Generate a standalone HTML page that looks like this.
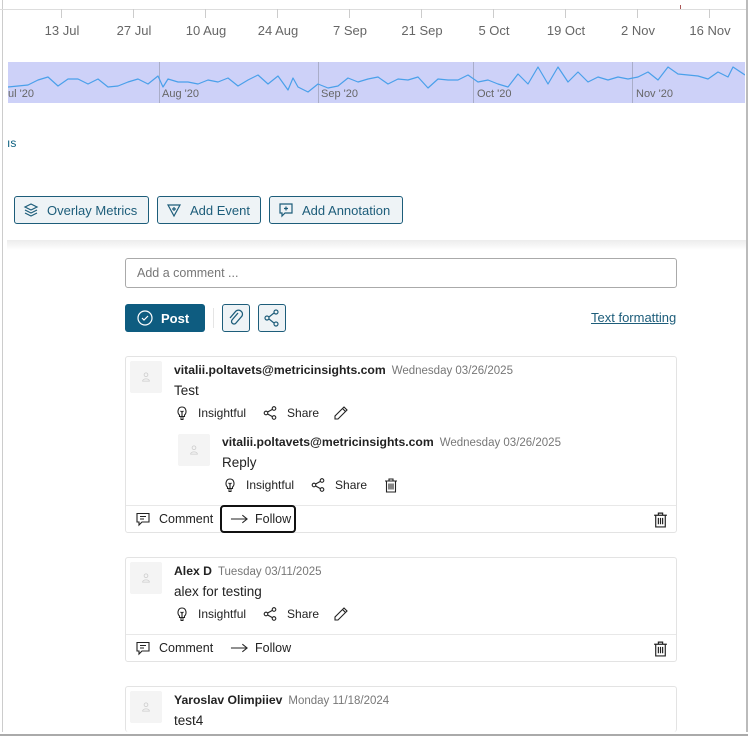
<!DOCTYPE html>
<html><head><meta charset="utf-8"><style>
*{box-sizing:border-box;margin:0;padding:0}
body{width:752px;height:739px;background:#fff;position:relative;overflow:hidden;font-family:"Liberation Sans",sans-serif;color:#222}
.a{position:absolute}
.tick{position:absolute;top:9px;width:1px;height:9px;background:#ccc}
.lbl{position:absolute;top:23px;font-size:13px;color:#666;width:72px;text-align:center}
.nl{position:absolute;top:88px;font-size:11px;color:#666}
.btn{position:absolute;top:196px;height:28px;border:1px solid #1d5d7a;border-radius:3px;background:#eef3f6;color:#1d5d7a;font-size:13px;display:flex;align-items:center;padding-left:8px;gap:8px}
.card{position:absolute;left:125px;width:552px;border:1px solid #e3e3e3;border-radius:3px;background:#fff}
.av{position:absolute;width:32px;height:32px;background:#f4f4f4;border-radius:2px;display:flex;align-items:center;justify-content:center}
.name{position:absolute;font-size:12.2px;font-weight:bold;color:#222;white-space:nowrap}
.date{font-weight:normal;color:#777;font-size:11.5px;margin-left:6px}
.txt{position:absolute;font-size:13.5px;color:#222}
.act{position:absolute;font-size:12px;color:#222;display:flex;align-items:center;white-space:nowrap}
.sm{font-size:12.5px}
svg.i{fill:none;stroke:#222;stroke-width:1.1}
</style></head><body>
<svg width="0" height="0" style="position:absolute"><defs>
<symbol id="bulb" viewBox="0 0 16 16"><path d="M5.5 10 C3 8 3.5 2 8 2 C12.5 2 13 8 10.5 10 V11.5 H5.5Z M6 13 H10 M6.5 14.5 H9.5 M8 11 V7 L6.5 6 M8 7 L9.5 6"/></symbol>
<symbol id="share" viewBox="0 0 16 16"><circle cx="12" cy="3.5" r="1.8"/><circle cx="4" cy="8" r="1.8"/><circle cx="12" cy="12.5" r="1.8"/><path d="M5.6 7 L10.4 4.4 M5.6 9 L10.4 11.6"/></symbol>
<symbol id="pen" viewBox="0 0 16 16"><path d="M11 2 L14 5 L5 14 L2 14 L2 11Z M9.5 3.5 L12.5 6.5"/></symbol>
<symbol id="trash" viewBox="0 0 16 16"><path d="M2 4 H14 M6 4 V2 H10 V4 M3.5 4 V15 H12.5 V4 M6 6.5 V12.5 M8 6.5 V12.5 M10 6.5 V12.5"/></symbol>
<symbol id="cmt" viewBox="0 0 16 16"><path d="M2 2.5 H14 V11 H7 L4 14 V11 H2Z M5 5.5 H11 M5 8 H9"/></symbol>
<symbol id="arr" viewBox="0 0 20 16"><path d="M1 8 H18 M13 4 L18 8 L13 12"/></symbol>
<symbol id="user" viewBox="0 0 16 16"><circle cx="8" cy="5" r="2.5"/><path d="M3.5 13.5 C3.5 9.5 12.5 9.5 12.5 13.5Z"/></symbol>
</defs></svg>
<div class="a" style="left:2px;top:0;width:1px;height:736px;background:#ccc"></div>
<div class="a" style="left:746px;top:0;width:2px;height:737px;background:#bbb"></div>
<div class="a" style="left:0;top:9px;width:746px;height:1px;background:#ddd"></div>
<div class="a" style="left:680px;top:5px;width:1px;height:4px;background:#a55"></div>
<div class="tick" style="left:61px"></div><div class="tick" style="left:133px"></div><div class="tick" style="left:205px"></div><div class="tick" style="left:277px"></div><div class="tick" style="left:349px"></div><div class="tick" style="left:421px"></div><div class="tick" style="left:493px"></div><div class="tick" style="left:565px"></div><div class="tick" style="left:637px"></div><div class="tick" style="left:709px"></div>
<div class="lbl" style="left:26px">13 Jul</div><div class="lbl" style="left:98px">27 Jul</div><div class="lbl" style="left:170px">10 Aug</div><div class="lbl" style="left:242px">24 Aug</div><div class="lbl" style="left:314px">7 Sep</div><div class="lbl" style="left:386px">21 Sep</div><div class="lbl" style="left:458px">5 Oct</div><div class="lbl" style="left:530px">19 Oct</div><div class="lbl" style="left:602px">2 Nov</div><div class="lbl" style="left:674px">16 Nov</div>
<div class="a" style="left:8px;top:62px;width:737px;height:41px;background:#cdd1f8"></div>
<div class="a" style="left:159px;top:62px;width:1px;height:41px;background:#a9adc9"></div>
<div class="a" style="left:318px;top:62px;width:1px;height:41px;background:#a9adc9"></div>
<div class="a" style="left:473px;top:62px;width:1px;height:41px;background:#a9adc9"></div>
<div class="a" style="left:632px;top:62px;width:1px;height:41px;background:#a9adc9"></div>
<svg class="a" style="left:8px;top:62px" width="737" height="41"><path d="M0 25 L10 24 L20 23 L30 18 L40 15 L50 24 L60 17 L70 17 L80 22 L90 17 L100 25 L110 24 L120 20 L130 17 L140 22 L150 14 L155 25 L160 17 L170 20 L180 20 L190 22 L200 18 L210 20 L220 16 L230 24 L240 18 L250 13 L260 22 L270 14 L280 28 L285 16 L290 25 L300 30 L310 22 L320 26 L330 24 L340 16 L350 20 L360 17 L370 15 L380 22 L390 17 L400 18 L410 15 L420 26 L430 17 L440 18 L450 18 L460 13 L470 20 L480 18 L490 22 L500 25 L510 12 L520 22 L530 5 L540 22 L550 5 L560 20 L570 10 L580 20 L590 15 L600 18 L610 15 L620 17 L630 15 L640 10 L650 18 L660 5 L670 12 L680 13 L690 14 L700 17 L710 10 L720 15 L725 5 L737 13" fill="none" stroke="#4aa0ea" stroke-width="1.2" stroke-linejoin="round"/></svg>
<div class="nl" style="left:8px">ul '20</div><div class="nl" style="left:162px">Aug '20</div><div class="nl" style="left:321px">Sep '20</div><div class="nl" style="left:477px">Oct '20</div><div class="nl" style="left:636px">Nov '20</div>
<div class="a" style="left:7px;top:136px;font-size:12px;color:#0b5f7f">ıs</div>
<div class="btn" style="left:14px;width:135px"><svg width="16" height="16" viewBox="0 0 16 16" fill="none" stroke="#1d5d7a" stroke-width="1.2"><path d="M8 2 L14 5 L8 8 L2 5Z M2 8 L8 11 L14 8 M2 11 L8 14 L14 11"/></svg>Overlay Metrics</div>
<div class="btn" style="left:157px;width:104px"><svg width="16" height="16" viewBox="0 0 16 16" fill="none" stroke="#1d5d7a" stroke-width="1.2"><path d="M2 3 H14 L8 14Z M8 5 V9 M6 7 H10"/></svg>Add Event</div>
<div class="btn" style="left:269px;width:134px"><svg width="16" height="16" viewBox="0 0 16 16" fill="none" stroke="#1d5d7a" stroke-width="1.2"><path d="M2 2 H14 V11 H7 L4 14 V11 H2Z M8 4.5 V8.5 M6 6.5 H10"/></svg>Add Annotation</div>
<div class="a" style="left:7px;top:240px;width:739px;height:10px;background:linear-gradient(#ececec,#fff)"></div>
<div class="a" style="left:125px;top:258px;width:552px;height:30px;border:1px solid #aaa;border-radius:3px;font-size:12.5px;color:#777;padding:7px 11px">Add a comment ...</div>
<div class="a" style="left:125px;top:304px;width:80px;height:28px;background:#0e5c80;border-radius:3px;color:#fff;font-size:13px;font-weight:bold;display:flex;align-items:center;padding-left:12px;gap:8px"><svg width="16" height="16" viewBox="0 0 16 16" fill="none" stroke="#fff" stroke-width="1.2"><circle cx="8" cy="8" r="7"/><path d="M5 8 L7 10 L11 6"/></svg>Post</div>
<div class="a" style="left:213px;top:308px;width:1px;height:20px;background:#e5e5e5"></div>
<div class="a" style="left:222px;top:304px;width:28px;height:28px;border:1px solid #1d5d7a;border-radius:3px;background:#eef3f6"><svg width="26" height="26" viewBox="0 0 26 26" fill="none" stroke="#1d5d7a" stroke-width="1.3"><path d="M15 8 L9 15 A2.5 2.5 0 0 0 13 18 L19 11 A4 4 0 0 0 13 6 L7 13"/></svg></div>
<div class="a" style="left:258px;top:304px;width:28px;height:28px;border:1px solid #1d5d7a;border-radius:3px;background:#eef3f6"><svg width="26" height="26" viewBox="0 0 26 26" fill="none" stroke="#1d5d7a" stroke-width="1.2"><circle cx="17" cy="7" r="2"/><circle cx="8" cy="13" r="2"/><circle cx="17" cy="19" r="2"/><path d="M10 12 L15 8 M10 14 L15 18"/></svg></div>
<div class="a" style="left:591px;top:310px;font-size:13px;color:#1d5d7a;text-decoration:underline">Text formatting</div>

<div class="card" style="top:356px;height:177px">
<div class="av" style="left:4px;top:4px"><svg class="i" width="12" height="12" style="stroke:#ccc"><use href="#user"/></svg></div>
<div class="name" style="left:48px;top:6px">vitalii.poltavets@metricinsights.com<span class="date">Wednesday 03/26/2025</span></div>
<div class="txt" style="left:48px;top:26px">Test</div>
<div class="act" style="left:48px;top:48px"><svg class="i" width="16" height="16" style="margin-right:8px"><use href="#bulb"/></svg>Insightful<svg class="i" width="16" height="16" style="margin:0 9px 0 16px"><use href="#share"/></svg>Share<svg class="i" width="16" height="16" style="margin-left:14px"><use href="#pen"/></svg></div>
<div class="av" style="left:52px;top:77px"><svg class="i" width="12" height="12" style="stroke:#ccc"><use href="#user"/></svg></div>
<div class="name" style="left:96px;top:78px">vitalii.poltavets@metricinsights.com<span class="date">Wednesday 03/26/2025</span></div>
<div class="txt" style="left:96px;top:98px">Reply</div>
<div class="act" style="left:96px;top:120px"><svg class="i" width="16" height="16" style="margin-right:8px"><use href="#bulb"/></svg>Insightful<svg class="i" width="16" height="16" style="margin:0 9px 0 16px"><use href="#share"/></svg>Share<svg class="i" width="16" height="16" style="margin-left:16px"><use href="#trash"/></svg></div>
<div class="a" style="left:0;top:148px;width:550px;height:1px;background:#e8e8e8"></div>
<div class="act sm" style="left:9px;top:154px"><svg class="i" width="16" height="16" style="margin-right:8px"><use href="#cmt"/></svg>Comment</div>
<div class="a" style="left:94px;top:148px;width:76px;height:28px;border:2px solid #111;border-radius:4px"></div>
<div class="act sm" style="left:104px;top:154px"><svg class="i" width="19" height="16" style="margin-right:6px"><use href="#arr"/></svg>Follow</div>
<div class="act" style="left:526px;top:154px"><svg class="i" width="17" height="17"><use href="#trash"/></svg></div>
</div>

<div class="card" style="top:557px;height:105px">
<div class="av" style="left:4px;top:4px"><svg class="i" width="12" height="12" style="stroke:#ccc"><use href="#user"/></svg></div>
<div class="name" style="left:48px;top:6px">Alex D<span class="date">Tuesday 03/11/2025</span></div>
<div class="txt" style="left:48px;top:26px">alex for testing</div>
<div class="act" style="left:48px;top:48px"><svg class="i" width="16" height="16" style="margin-right:8px"><use href="#bulb"/></svg>Insightful<svg class="i" width="16" height="16" style="margin:0 9px 0 16px"><use href="#share"/></svg>Share<svg class="i" width="16" height="16" style="margin-left:14px"><use href="#pen"/></svg></div>
<div class="a" style="left:0;top:76px;width:550px;height:1px;background:#e8e8e8"></div>
<div class="act sm" style="left:9px;top:82px"><svg class="i" width="16" height="16" style="margin-right:8px"><use href="#cmt"/></svg>Comment</div>
<div class="act sm" style="left:104px;top:82px"><svg class="i" width="19" height="16" style="margin-right:6px"><use href="#arr"/></svg>Follow</div>
<div class="act" style="left:526px;top:82px"><svg class="i" width="17" height="17"><use href="#trash"/></svg></div>
</div>

<div class="card" style="top:686px;height:46px;border-bottom:none">
<div class="av" style="left:4px;top:4px"><svg class="i" width="12" height="12" style="stroke:#ccc"><use href="#user"/></svg></div>
<div class="name" style="left:48px;top:6px">Yaroslav Olimpiiev<span class="date">Monday 11/18/2024</span></div>
<div class="txt" style="left:48px;top:26px">test4</div>
</div>
<div class="a" style="left:0;top:732px;width:752px;height:7px;background:#fff"></div>
<div class="a" style="left:0;top:734px;width:748px;height:2px;background:#aaa"></div>
</body></html>
